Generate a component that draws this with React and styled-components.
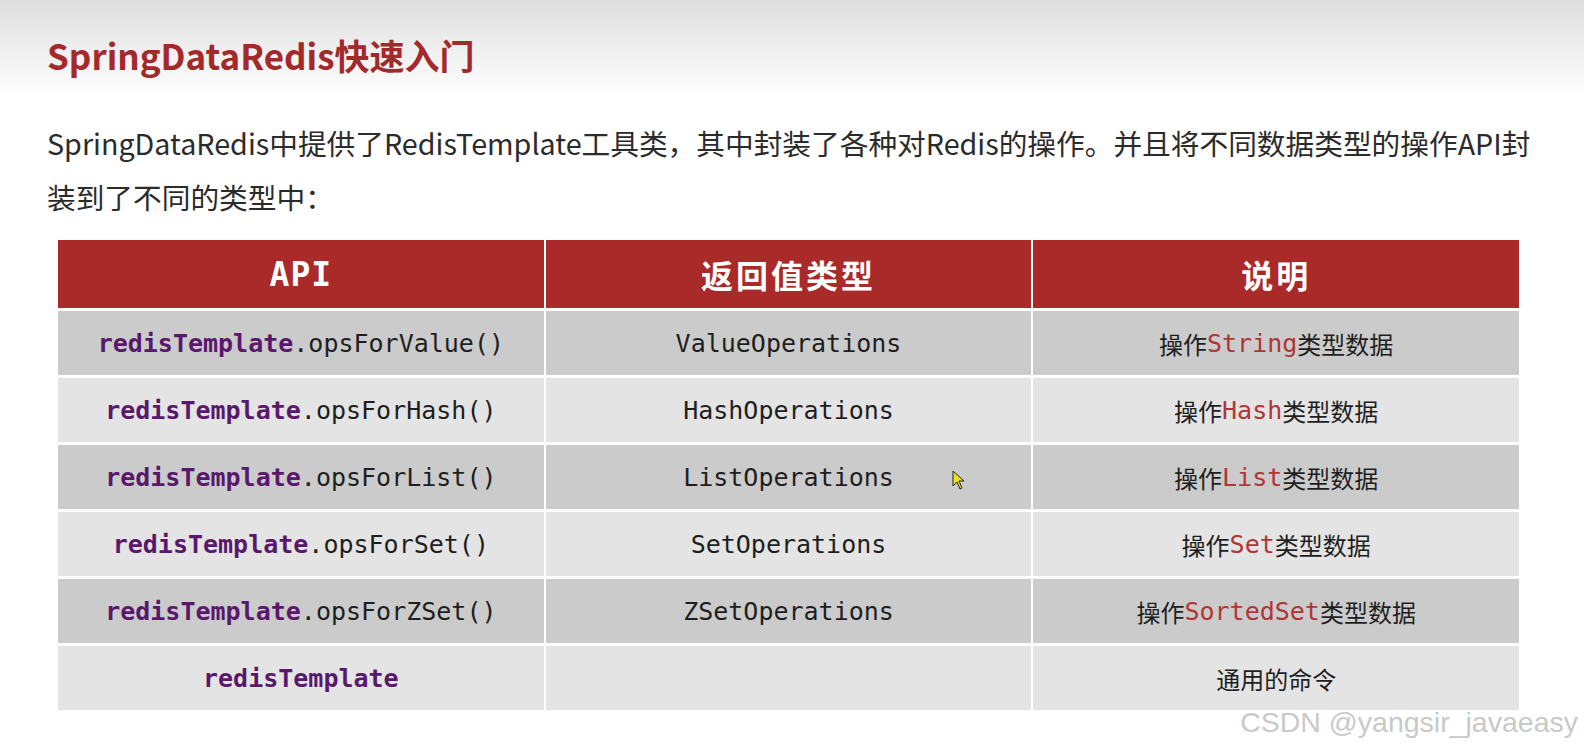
import React from "react";
import styled, { createGlobalStyle } from "styled-components";

const GlobalStyle = createGlobalStyle`
  html, body {
    margin: 0;
    padding: 0;
    background: #ffffff;
  }
  body {
    font-family: "Noto Sans CJK SC", "Noto Sans", sans-serif;
    color: #2a2a2a;
  }
`;

const Page = styled.div`
  position: relative;
  width: 1584px;
  height: 748px;
  overflow: hidden;
  background: #ffffff;
`;

const TitleBand = styled.header`
  height: 100px;
  box-sizing: border-box;
  padding: 31px 0 0 47px;
  background: linear-gradient(#dedede 0%, #f1f1f1 55%, #ffffff 100%);
`;

const Title = styled.h1`
  margin: 0;
  font-family: "Noto Sans CJK SC", sans-serif;
  font-size: 35px;
  line-height: 48px;
  font-weight: 700;
  color: #a3292a;
`;

const Intro = styled.p`
  margin: 16px 0 0 47px;
  font-family: "Noto Sans CJK SC", sans-serif;
  font-size: 28.7px;
  line-height: 54px;
  color: #2b2b2b;
  white-space: nowrap;
`;

const Table = styled.div`
  margin: 16px 0 0 58px;
  width: 1461px;
  display: grid;
  grid-template-columns: repeat(3, 1fr);
  grid-template-rows: 68px repeat(6, 64px);
  column-gap: 2px;
  row-gap: 3px;
`;

const HeadCell = styled.div`
  display: flex;
  align-items: center;
  justify-content: center;
  background: #a92a28;
  color: #ffffff;
  font-family: ${(p) =>
    p.mono ? '"DejaVu Sans Mono", monospace' : '"Noto Sans CJK SC", sans-serif'};
  font-size: ${(p) => (p.mono ? "33px" : "32px")};
  font-weight: 700;
  letter-spacing: ${(p) => (p.mono ? "1px" : "3px")};
`;

const Cell = styled.div`
  display: flex;
  align-items: center;
  justify-content: center;
  background: ${(p) => (p.dark ? "#cbcbcb" : "#e4e4e4")};
  font-family: "DejaVu Sans Mono", monospace;
  font-size: 25px;
  color: #1e1e1e;
  white-space: nowrap;
`;

const NoteCell = styled(Cell)`
  font-family: "Noto Sans CJK SC", sans-serif;
  font-size: 24px;
`;

const Obj = styled.span`
  font-weight: 700;
  color: #5a186c;
`;

const TypeName = styled.span`
  font-family: "DejaVu Sans Mono", monospace;
  font-size: 25px;
  color: #b03535;
`;

const Watermark = styled.div`
  position: absolute;
  right: 6px;
  bottom: 9px;
  font-family: "Liberation Sans", Arial, sans-serif;
  font-size: 28.5px;
  color: #c9c9c9;
  text-shadow: 0 0 2px #ffffff;
`;

const Cursor = styled.svg`
  position: absolute;
  left: 952px;
  top: 470px;
`;

const rows = [
  { method: ".opsForValue()", ret: "ValueOperations", type: "String" },
  { method: ".opsForHash()", ret: "HashOperations", type: "Hash" },
  { method: ".opsForList()", ret: "ListOperations", type: "List" },
  { method: ".opsForSet()", ret: "SetOperations", type: "Set" },
  { method: ".opsForZSet()", ret: "ZSetOperations", type: "SortedSet" },
];

export default function App() {
  return (
    <Page>
      <GlobalStyle />
      <TitleBand>
        <Title>SpringDataRedis快速入门</Title>
      </TitleBand>
      <Intro>
        SpringDataRedis中提供了RedisTemplate工具类，其中封装了各种对Redis的操作。并且将不同数据类型的操作API封
        <br />
        装到了不同的类型中：
      </Intro>
      <Table>
        <HeadCell mono>API</HeadCell>
        <HeadCell>返回值类型</HeadCell>
        <HeadCell>说明</HeadCell>
        {rows.map((r, i) => (
          <React.Fragment key={r.ret}>
            <Cell dark={i % 2 === 0}>
              <Obj>redisTemplate</Obj>
              {r.method}
            </Cell>
            <Cell dark={i % 2 === 0}>{r.ret}</Cell>
            <NoteCell dark={i % 2 === 0}>
              操作<TypeName>{r.type}</TypeName>类型数据
            </NoteCell>
          </React.Fragment>
        ))}
        <Cell>
          <Obj>redisTemplate</Obj>
        </Cell>
        <Cell />
        <NoteCell>通用的命令</NoteCell>
      </Table>
      <Cursor width="14" height="20" viewBox="0 0 14 20">
        <path d="M1 1 L1 16 L5 12 L8 19 L10 18 L7 11 L12 11 Z" fill="#e8e22a" stroke="#222" strokeWidth="1" />
      </Cursor>
      <Watermark>CSDN @yangsir_javaeasy</Watermark>
    </Page>
  );
}
